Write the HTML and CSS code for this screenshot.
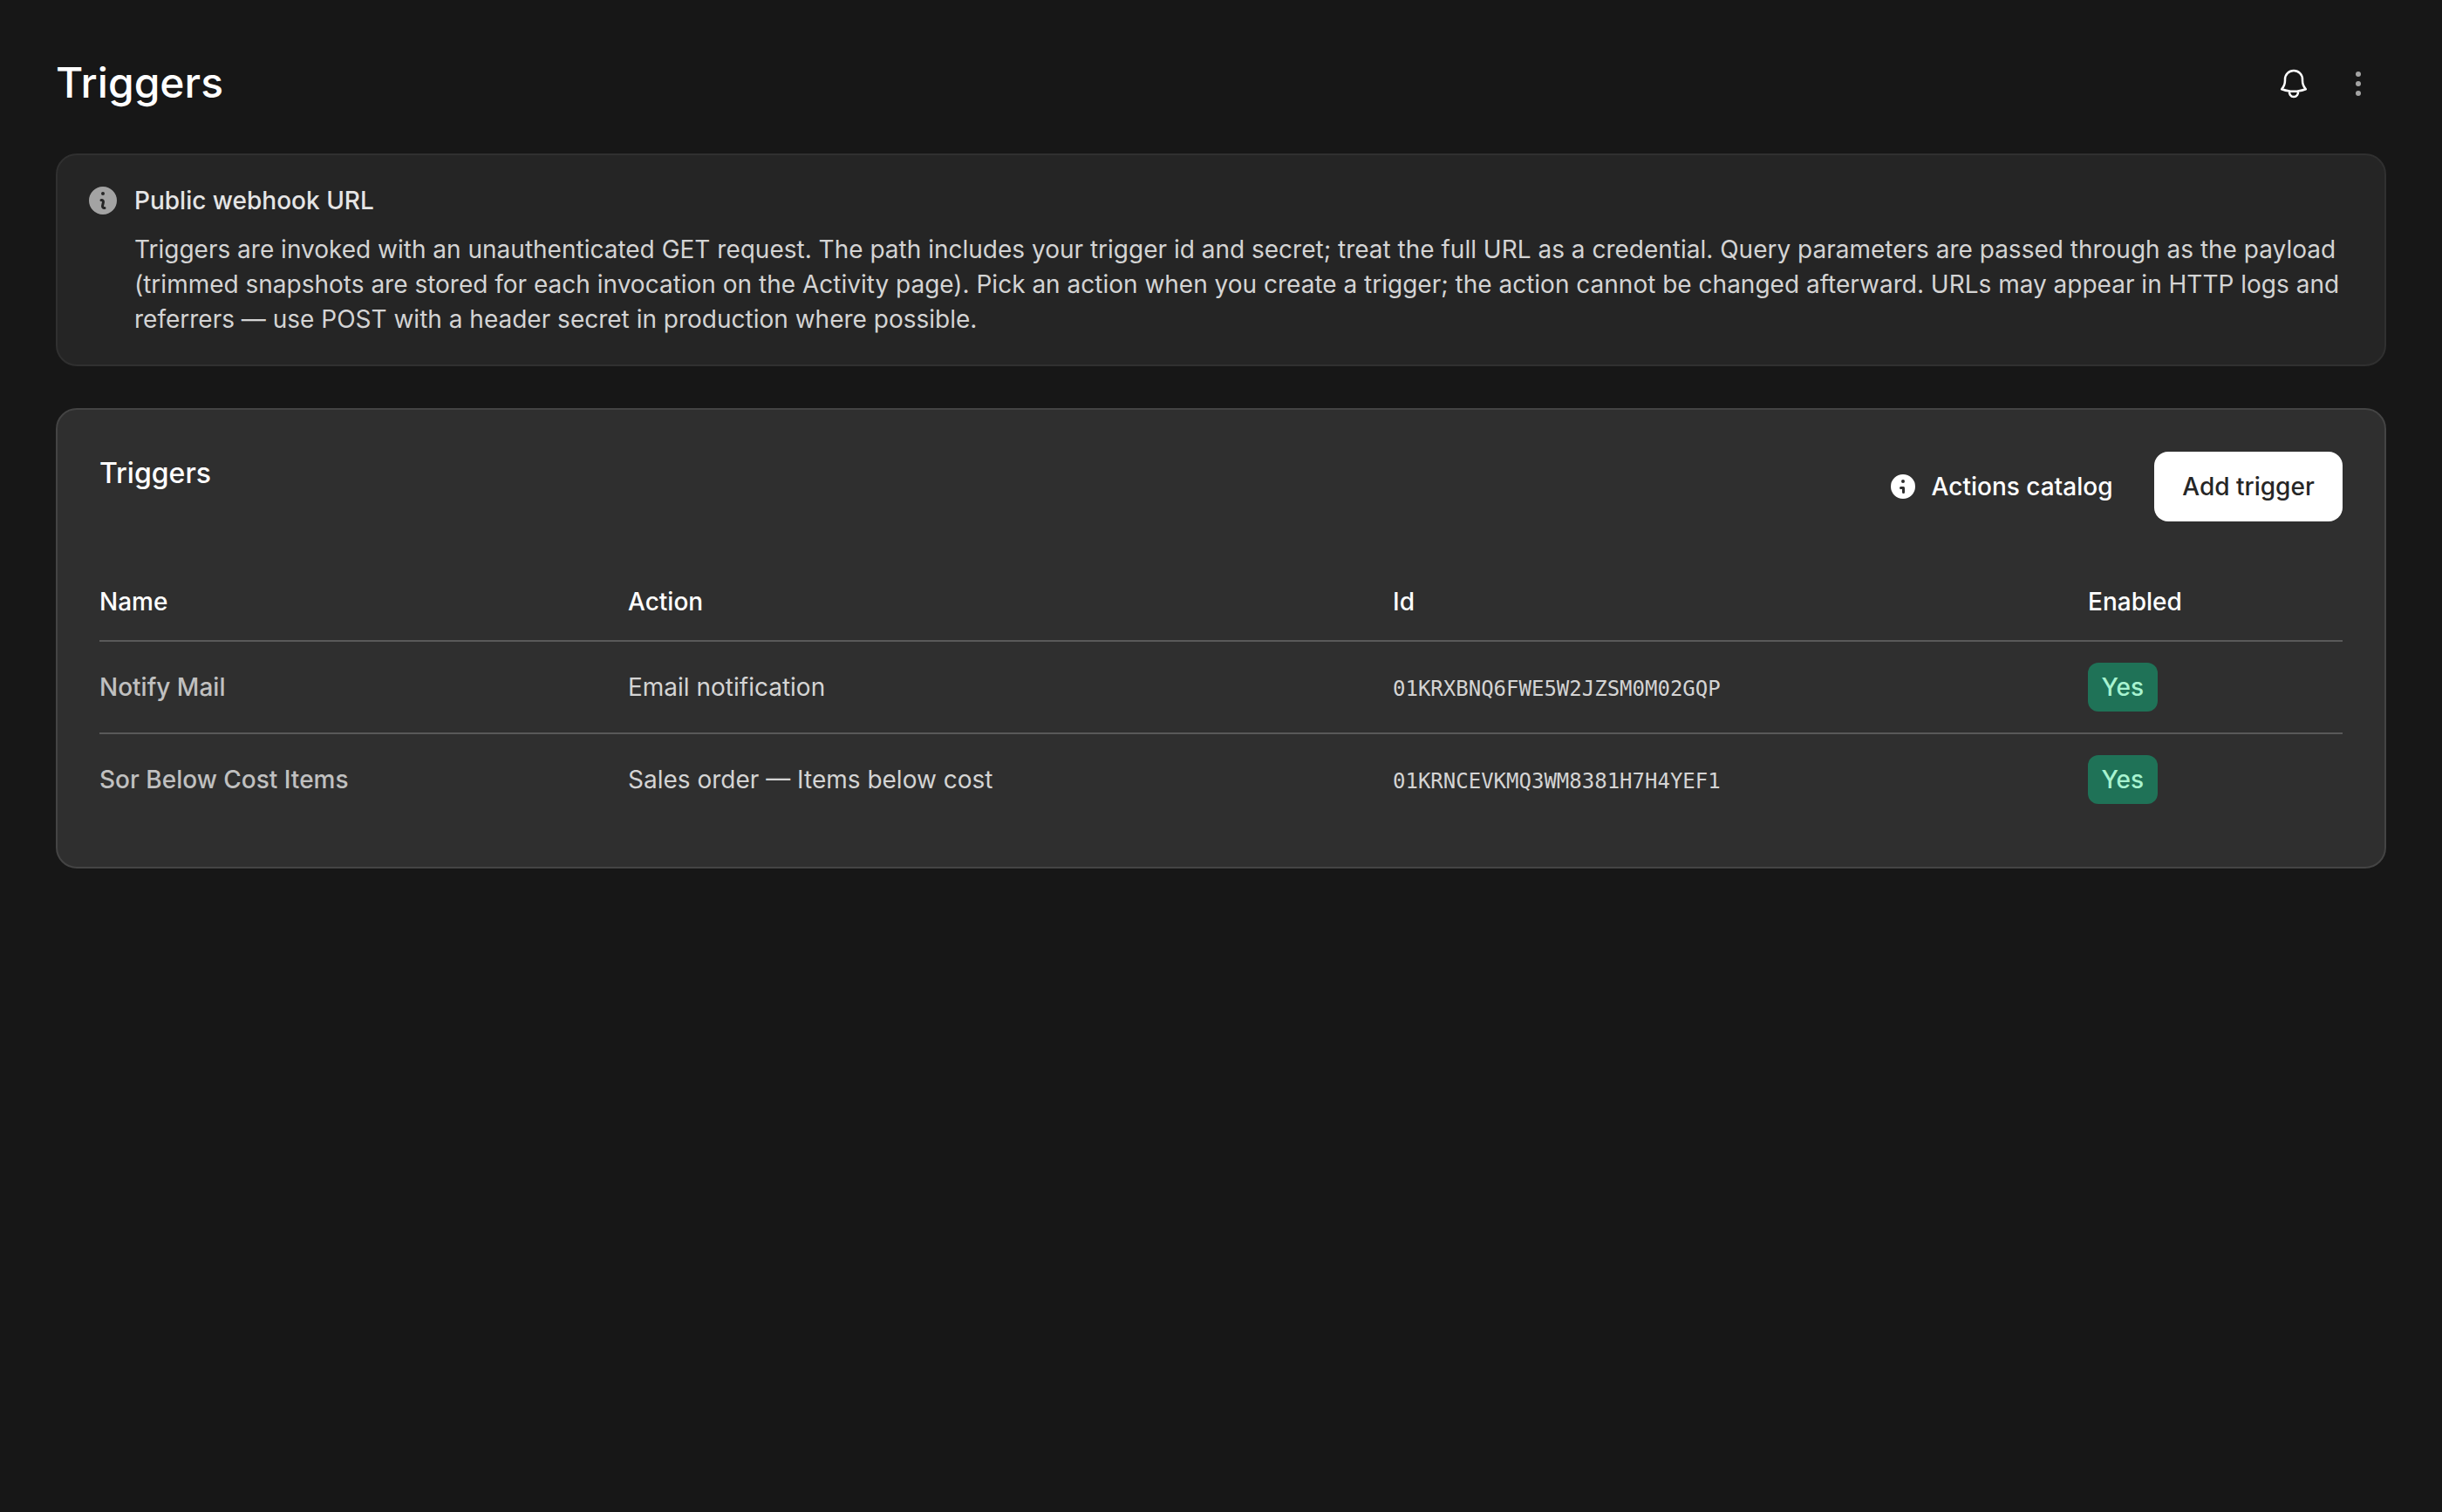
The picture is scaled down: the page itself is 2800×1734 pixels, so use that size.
FILE: index.html
```html
<!DOCTYPE html>
<html lang="en">
  <head>
    <meta charset="UTF-8" />
    <meta name="viewport" content="width=device-width, initial-scale=1.0" />
    <title>Triggers</title>
    <link rel="stylesheet" href="styles.css">
  </head>
  <body>
    <header class="page-header">
      <h1>Triggers</h1>
      <div class="page-actions">
        <button class="icon-button" aria-label="Notifications">
          <svg class="icon" viewBox="0 0 24 24" fill="none" stroke="currentColor" stroke-width="1.5" stroke-linecap="round" stroke-linejoin="round">
            <path d="M14.857 17.082a23.848 23.848 0 0 0 5.454-1.31A8.967 8.967 0 0 1 18 9.75V9A6 6 0 0 0 6 9v.75a8.967 8.967 0 0 1-2.312 6.022c1.733.64 3.56 1.085 5.455 1.31m5.714 0a24.255 24.255 0 0 1-5.714 0m5.714 0a3 3 0 1 1-5.714 0" />
          </svg>
        </button>
        <button class="icon-button muted" aria-label="More">
          <svg class="icon" viewBox="0 0 20 20" fill="currentColor">
            <circle cx="10" cy="4.5" r="1.5" />
            <circle cx="10" cy="10" r="1.5" />
            <circle cx="10" cy="15.5" r="1.5" />
          </svg>
        </button>
      </div>
    </header>

    <section class="callout">
      <svg class="icon callout-icon" viewBox="0 0 20 20" fill="currentColor">
        <path fill-rule="evenodd" clip-rule="evenodd" d="M18 10a8 8 0 1 1-16 0 8 8 0 0 1 16 0Zm-7-4a1 1 0 1 1-2 0 1 1 0 0 1 2 0ZM9 9a.75.75 0 0 0 0 1.5h.253a.25.25 0 0 1 .244.304l-.459 2.066A1.75 1.75 0 0 0 10.747 15H11a.75.75 0 0 0 0-1.5h-.253a.25.25 0 0 1-.244-.304l.459-2.066A1.75 1.75 0 0 0 9.253 9H9Z" />
      </svg>
      <div class="callout-body">
        <h2>Public webhook URL</h2>
        <p>
          Triggers are invoked with an unauthenticated GET request. The path includes your trigger id and secret; treat the full URL as a credential. Query parameters are passed through as the payload (trimmed snapshots are stored for each invocation on the Activity page). Pick an action when you create a trigger; the action cannot be changed afterward. URLs may appear in HTTP logs and referrers — use POST with a header secret in production where possible.
        </p>
      </div>
    </section>

    <section class="card">
      <div class="card-header">
        <h2>Triggers</h2>
        <div class="card-actions">
          <button class="button">
            <svg class="icon-small" viewBox="0 0 16 16" fill="currentColor">
              <path fill-rule="evenodd" clip-rule="evenodd" d="M15 8A7 7 0 1 1 1 8a7 7 0 0 1 14 0ZM9 5a1 1 0 1 1-2 0 1 1 0 0 1 2 0ZM6.75 8a.75.75 0 0 0 0 1.5h.75v1.75a.75.75 0 0 0 1.5 0v-2.5A.75.75 0 0 0 8.25 8h-1.5Z" />
            </svg>
            Actions catalog
          </button>
          <button class="button primary">Add trigger</button>
        </div>
      </div>

      <div class="table-scroll">
        <table>
          <thead>
            <tr>
              <th class="col-name">Name</th>
              <th class="col-action">Action</th>
              <th class="col-id">Id</th>
              <th>Enabled</th>
            </tr>
          </thead>
          <tbody>
            <tr>
              <td class="name">Notify Mail</td>
              <td>Email notification</td>
              <td><code>01KRXBNQ6FWE5W2JZSM0M02GQP</code></td>
              <td><span class="badge">Yes</span></td>
            </tr>
            <tr>
              <td class="name">Sor Below Cost Items</td>
              <td>Sales order — Items below cost</td>
              <td><code>01KRNCEVKMQ3WM8381H7H4YEF1</code></td>
              <td><span class="badge">Yes</span></td>
            </tr>
          </tbody>
        </table>
      </div>
    </section>
  </body>
</html>
```
FILE: styles.css
```css
* {
  box-sizing: border-box;
}
body {
  margin: 0;
  padding: 64px;
  background-color: #171717;
  color: #fff;
  font-family: Inter, sans-serif;
  font-size: 28px;
  line-height: 40px;
}
h1,
h2,
p {
  margin: 0;
  font-weight: 500;
}
button {
  border: none;
  background: none;
  color: inherit;
  font: inherit;
  cursor: pointer;
}
.icon {
  width: 40px;
  height: 40px;
  flex-shrink: 0;
}
.icon-small {
  width: 32px;
  height: 32px;
}

.page-header {
  display: flex;
  justify-content: space-between;
  height: 64px;
  margin-bottom: 48px;
}
.page-header h1 {
  font-size: 48px;
  line-height: 62px;
}
.page-actions {
  display: flex;
  gap: 10px;
}
.icon-button {
  display: flex;
  align-items: center;
  justify-content: center;
  width: 64px;
  height: 64px;
  padding: 0;
}
.icon-button.muted {
  color: #a3a3a3;
}

.callout {
  display: flex;
  gap: 16px;
  padding: 32px;
  margin-bottom: 48px;
  border: 2px solid #303030;
  border-radius: 24px;
  background-color: #252525;
}
.callout-icon {
  color: #a3a3a3;
}
.callout-body h2 {
  margin-bottom: 16px;
  font-size: 28px;
  color: #e5e5e5;
}
.callout-body p {
  font-weight: 400;
  color: #d4d4d4;
}

.card {
  padding: 48px;
  border: 2px solid #444;
  border-radius: 24px;
  background-color: #2f2f2f;
}
.card-header {
  display: flex;
  justify-content: space-between;
  margin-bottom: 48px;
}
.card-header h2 {
  font-size: 32px;
  line-height: 50px;
}
.card-actions {
  display: flex;
  gap: 15.5px;
}
.button {
  display: flex;
  align-items: center;
  justify-content: center;
  gap: 16.5px;
  height: 80px;
  padding: 0 32px;
  border-radius: 16px;
  font-weight: 500;
}
.button.primary {
  min-width: 216px;
  background-color: #fff;
  color: #262626;
}

.table-scroll {
  overflow-x: auto;
}
table {
  width: 100%;
  table-layout: fixed;
  border-collapse: separate;
  border-spacing: 0;
}
th,
td {
  padding: 24px 24px 24px 0;
  text-align: left;
  vertical-align: middle;
}
th {
  font-weight: 500;
  border-bottom: 2px solid #595959;
}
td {
  color: #d4d4d4;
}
tbody tr:not(:last-child) td {
  border-bottom: 2px solid #595959;
}
.col-name {
  width: 606px;
}
.col-action {
  width: 877px;
}
.col-id {
  width: 797px;
}
.name {
  font-weight: 500;
  color: #c0c0c0;
}
code {
  font-family: "DejaVu Sans Mono", monospace;
  font-size: 24px;
  line-height: 1;
}
.badge {
  display: block;
  width: fit-content;
  padding: 8px 15.5px;
  border-radius: 12px;
  background-color: #1f7257;
  color: #a7f3d0;
  font-weight: 500;
}
```
